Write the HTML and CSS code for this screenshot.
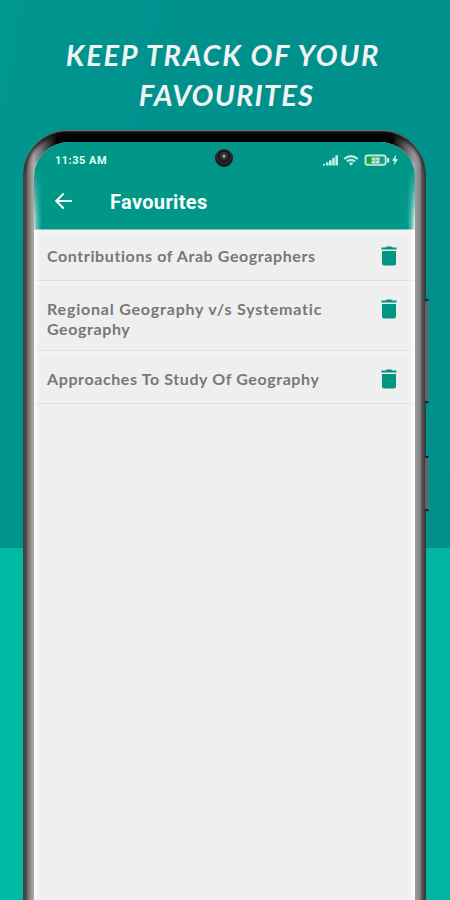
FILE: index.html
```html
<!DOCTYPE html>
<html lang="en">
<head>
<meta charset="utf-8">
<title>Favourites</title>
<link rel="stylesheet" href="styles.css">
</head>
<body>
<svg class="defs" width="0" height="0" aria-hidden="true">
  <symbol id="trash" viewBox="0 0 16 20"><path d="M1 5h14v12.5a2 2 0 0 1-2 2H3a2 2 0 0 1-2-2zM.4 1.5H4.600L5.800.4h4.400l1.200 1.100h4.200v2H.4z"/></symbol>
</svg>
<main class="promo">
  <h1 class="headline"><span class="line-one">KEEP TRACK OF YOUR</span><span class="line-two">FAVOURITES</span></h1>
  <div class="phone">
    <i class="key volume"></i>
    <i class="key power"></i>
    <div class="screen">
      <header class="top">
        <div class="status">
          <span class="clock">11:35 AM</span>
          <span class="camera"></span>
          <svg class="indicators" width="76" height="14" viewBox="0 0 76 14">
            <g fill="#c3eee4">
              <path d="M0 12.500V11h2v1.500zM3 12.500V9.300h2.500v3.200zM6 12.500V7.300h2.600v5.200zM9.200 12.500V4.700h2.600v7.800zM12.400 12.500V2.200H15v10.300z"/>
              <path d="M20.500 5.200Q28-1.200 35.500 5.200L34 6.700Q28 1.700 22 6.700zM23.200 7.700Q28 3.800 32.800 7.700L31.300 9.200Q28 6.600 24.700 9.200zM25.700 10.100Q28 8.500 30.300 10.100L28 12.700z"/>
            </g>
            <rect x="42.300" y="2.300" width="20.500" height="9.800" rx="2.500" fill="#55bba4" stroke="#c3eee4" stroke-width="1.500"/>
            <path d="M64 4.500l2.300 1v3.600l-2.300 1z" fill="#c3eee4"/>
            <rect x="44" y="4" width="4.500" height="6.500" fill="#1da42b"/>
            <rect x="57" y="4" width="4.300" height="6.500" fill="#26977f"/>
            <text x="48.500" y="10" class="charge">22</text>
            <path d="M73.300 1.500L69 7.800h2.600L70.500 12.500 75 6.200h-2.700z" fill="#dcfff6"/>
          </svg>
        </div>
        <div class="toolbar">
          <svg width="20" height="18" viewBox="0 0 20 18" fill="none" stroke="#f2fffb" stroke-width="2"><path d="M18 9H2.500M9.700 1.500L2.200 9l7.500 7.500"/></svg>
          <h2 class="title">Favourites</h2>
        </div>
      </header>
      <ul class="list">
        <li class="item first"><p><span class="t1">Contributions of Arab Geographers</span></p><svg class="trash"><use href="#trash"/></svg></li>
        <li class="item second"><p><span class="t2">Regional Geography v/s Systematic</span><span class="t3">Geography</span></p><svg class="trash"><use href="#trash"/></svg></li>
        <li class="item third"><p><span class="t4">Approaches To Study Of Geography</span></p><svg class="trash"><use href="#trash"/></svg></li>
      </ul>
    </div>
  </div>
</main>
</body>
</html>
```
FILE: styles.css
```css
* { box-sizing: border-box; }
body { margin: 0; overflow: hidden; }
.defs { position: absolute; }
.promo {
  height: 900px;
  overflow: hidden;
  background:
    linear-gradient(90deg, #00b9a4, #00b5a1) 0 548px / 100% 352px no-repeat,
    linear-gradient(100deg, #009790, #00918d 30%, #00908c);
}
.headline {
  margin: 0;
  height: 130px;
  padding-top: 35px;
  display: flex;
  flex-direction: column;
  align-items: center;
  font: italic 700 29px/40px Lato, sans-serif;
  color: #f1f3f3;
  white-space: nowrap;
}
.headline span { display: block; }
.line-one { margin-right: 4px; letter-spacing: 1.7px; }
.line-two { margin-left: 3px; letter-spacing: 1.2px; }
.phone {
  position: relative;
  width: 403px;
  height: 800px;
  margin-left: 23px;
  padding: 12px 11px 0;
  border-radius: 45px 45px 0 0;
  background:
    linear-gradient(90deg, transparent 10px, #000 34px, #000 369px, transparent 393px) 0 2px / 100% 30px no-repeat,
    linear-gradient(90deg, #605f5e 0, #4c4a49 3px, #77706f 5px, #aaa6a5 10px, #aaa 12px, #aaa 390px, #979a98 393px, #858786 397px, #555 399px, #504e50 402px, #444 403px);
  box-shadow: inset 0 1px 1px #777, inset 0 4px 4px #111;
}
.key {
  position: absolute;
  left: 402px;
  width: 4px;
  background: #626463;
  border-top: 2px solid #123;
  border-bottom: 2px solid #123;
  border-right: 1px solid #4a7a75;
}
.volume { top: 169px; height: 104px; }
.power { top: 326px; height: 55px; }
.screen {
  position: relative;
  height: 100%;
  overflow: hidden;
  border-radius: 35px 35px 0 0;
  background: #efefef;
}
.screen::after {
  content: "";
  position: absolute;
  inset: 28px 0 0;
  background: linear-gradient(90deg, #fffb 0, #fff5 3px, #fff0 8px, #fff0 373px, #fff5 377px, #fffd 381px);
  mask-image: linear-gradient(transparent, #000 50px);
}
.top { height: 88px; background: #009788; border-bottom: 1px solid #75c8bd; }
.status {
  height: 36px;
  display: grid;
  grid-template-columns: 1fr 18px 1fr;
  align-items: center;
  padding: 0 16px 0 21px;
}
.clock { font: 700 11px Roboto, sans-serif; color: #e0fff5; letter-spacing: .5px; }
.camera {
  width: 18px;
  height: 18px;
  margin-left: -3px;
  margin-top: -4px;
  border-radius: 50%;
  background: radial-gradient(circle at 50% 40%, #aaa 0 1px, #373033 2px 4px, #121112 5px, #302c2e 7px, #171616 9px);
}
.indicators { justify-self: end; }
.charge { font: 700 7px Roboto, sans-serif; fill: #eefff9; }
.toolbar { display: flex; align-items: center; height: 46px; padding-left: 20px; }
.title { margin: 2px 0 0 36px; font: 700 20px/24px Roboto, sans-serif; letter-spacing: .35px; color: #f5fffc; }
.list { list-style: none; margin: 0; padding: 0; }
.item {
  display: flex;
  justify-content: space-between;
  padding: 17px 18px 0 13px;
  border-bottom: 1px solid #dfdfdf;
  box-shadow: inset 0 5px 0 -1px #f2f2f2;
}
.first { height: 51px; padding-top: 16px; }
.second { height: 70px; padding-top: 18px; }
.third { height: 53px; padding-top: 18px; }
.item p { margin: 0; font: 700 16px/20px Lato, sans-serif; color: #777; white-space: nowrap; }
.item span { display: block; }
.t1 { letter-spacing: .6px; }
.t2 { letter-spacing: .8px; }
.t3 { letter-spacing: .6px; }
.t4 { letter-spacing: .6px; }
.trash { width: 16px; height: 20px; fill: #009682; }
```
